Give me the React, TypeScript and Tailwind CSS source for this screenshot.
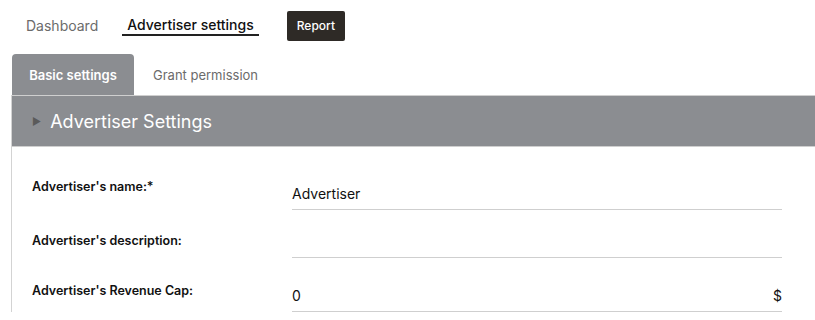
export default function App() {
  return (
    <div className="min-h-screen w-[815px] bg-white font-['Inter',sans-serif] text-[#111]">
      {/* top nav */}
      <nav className="flex h-[43px] items-end gap-[24px] pl-[26px]">
        <a className="pb-[9px] text-[14px] leading-[16px] text-[#6b6b6b]">Dashboard</a>
        <a className="mb-[7px] border-b-2 border-[#222] px-[5px] pb-[1px] text-[14px] leading-[16px] font-medium text-[#111]">
          Advertiser settings
        </a>
        <button className="mb-[2px] ml-[4px] h-[30px] rounded-[2px] bg-[#2e2a26] px-[10px] text-[12px] font-medium text-white">
          Report
        </button>
      </nav>

      {/* tabs */}
      <div className="mt-[11px] flex h-[41px] items-stretch pl-[12px]">
        <div className="flex w-[122px] items-center justify-center rounded-t-[4px] bg-[#8b8d91] pt-[2px] text-[13px] font-semibold text-white">
          Basic settings
        </div>
        <div className="flex items-center px-[19px] pt-[2px] text-[13px] text-[#6b6b6b]">
          Grant permission
        </div>
      </div>

      {/* section */}
      <section className="ml-[11px] border-l border-[#d3d3d3]">
        <header className="flex h-[52px] items-center gap-[9px] border-y border-[#cfcfcf] bg-[#8b8d91] pl-[20px]">
          <span className="text-[10px] text-[#5a5a5a]">&#9654;</span>
          <h2 className="text-[18px] text-white">Advertiser Settings</h2>
        </header>

        <div className="flex flex-col pr-[33px]">
          <div className="flex h-[63px]">
            <label className="w-[280px] pl-[20px] pt-[31px] text-[12.5px] font-semibold">
              Advertiser's name:*
            </label>
            <div className="flex flex-1 items-end border-b border-[#cfcfcf] pb-[5px] text-[14px]">
              Advertiser
            </div>
          </div>
          <div className="flex h-[48px]">
            <label className="w-[280px] pl-[20px] pt-[22px] text-[12.5px] font-semibold">
              Advertiser's description:
            </label>
            <div className="flex-1 border-b border-[#cfcfcf]" />
          </div>
          <div className="flex h-[54px]">
            <label className="w-[280px] pl-[20px] pt-[24px] text-[12.5px] font-semibold">
              Advertiser's Revenue Cap:
            </label>
            <div className="flex flex-1 items-end justify-between border-b border-[#cfcfcf] pb-[5px] text-[14px]">
              <span>0</span>
              <span>$</span>
            </div>
          </div>
        </div>
      </section>
    </div>
  );
}
